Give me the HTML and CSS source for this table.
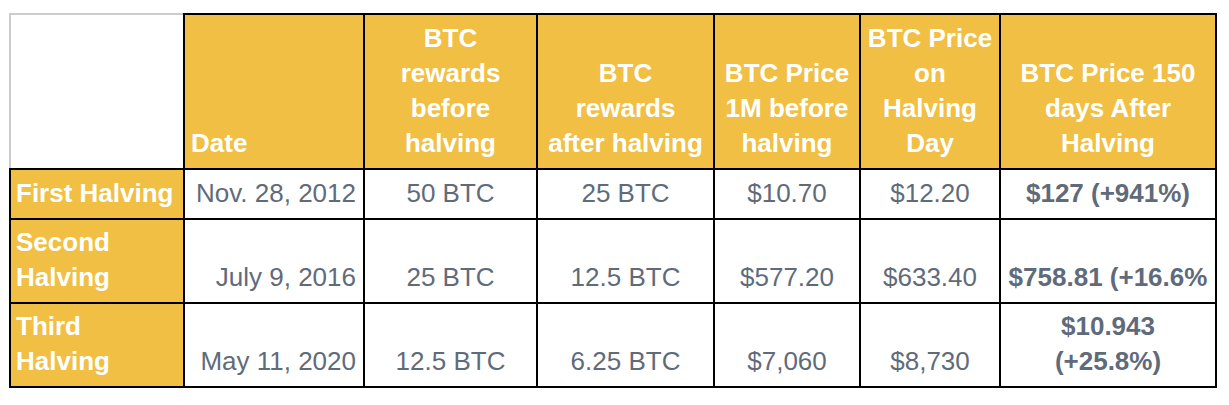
FILE: index.html
```html
<!DOCTYPE html>
<html lang="en">
<head>
<meta charset="utf-8">
<title>Bitcoin Halvings</title>
<link rel="stylesheet" href="styles.css">
</head>
<body>
<div class="page">
  <table class="halving">
    <colgroup>
      <col class="c-label">
      <col class="c-date">
      <col class="c-before">
      <col class="c-after">
      <col class="c-1m">
      <col class="c-day">
      <col class="c-150">
    </colgroup>
    <thead>
      <tr class="head-row">
        <th class="corner"></th>
        <th class="date-head">Date</th>
        <th>BTC<br>rewards<br>before<br>halving</th>
        <th>BTC<br>rewards<br>after halving</th>
        <th>BTC Price<br>1M before<br>halving</th>
        <th>BTC Price<br>on<br>Halving<br>Day</th>
        <th>BTC Price 150<br>days After<br>Halving</th>
      </tr>
    </thead>
    <tbody>
      <tr class="row-short">
        <th class="row-label">First Halving</th>
        <td class="date">Nov. 28, 2012</td>
        <td>50 BTC</td>
        <td>25 BTC</td>
        <td>$10.70</td>
        <td>$12.20</td>
        <td class="strong">$127 (+941%)</td>
      </tr>
      <tr class="row-tall">
        <th class="row-label">Second<br>Halving</th>
        <td class="date">July 9, 2016</td>
        <td>25 BTC</td>
        <td>12.5 BTC</td>
        <td>$577.20</td>
        <td>$633.40</td>
        <td class="strong">$758.81 (+16.6%</td>
      </tr>
      <tr class="row-tall">
        <th class="row-label">Third<br>Halving</th>
        <td class="date">May 11, 2020</td>
        <td>12.5 BTC</td>
        <td>6.25 BTC</td>
        <td>$7,060</td>
        <td>$8,730</td>
        <td class="strong">$10.943<br>(+25.8%)</td>
      </tr>
    </tbody>
  </table>
</div>
</body>
</html>
```

FILE: styles.css
```css
html, body {
  margin: 0;
  padding: 0;
  background: #ffffff;
}

.page {
  padding: 13px 0 0 9px;
}

.halving {
  border-collapse: collapse;
  table-layout: fixed;
  width: 1206px;
  font-family: "Liberation Sans", Arial, Helvetica, sans-serif;
  font-size: 26px;
  line-height: 35px;
}

.c-label { width: 174px; }
.c-date { width: 180px; }
.c-before { width: 173px; }
.c-after { width: 177px; }
.c-1m { width: 146px; }
.c-day { width: 140px; }
.c-150 { width: 216px; }

.halving th,
.halving td {
  border: 2px solid #000000;
  padding: 0 6px 7px 6px;
  vertical-align: bottom;
  text-align: center;
  white-space: nowrap;
  overflow: hidden;
}

.halving thead th {
  background: #f0bf43;
  color: #ffffff;
  font-weight: 700;
}

.halving thead th.corner {
  background: #ffffff;
  border-top-color: #cccccc;
  border-left-color: #cccccc;
}

.halving thead th.date-head {
  text-align: left;
}

.head-row { height: 155px; }
.row-short { height: 50px; }
.row-tall { height: 84px; }

.halving tbody th.row-label {
  background: #f0bf43;
  color: #ffffff;
  font-weight: 700;
  text-align: left;
  padding-left: 5px;
}

.halving tbody td {
  background: #ffffff;
  color: #5f6b7a;
  font-weight: 400;
}

.halving tbody td.date {
  text-align: right;
  padding-right: 7px;
}

.halving tbody td.strong {
  font-weight: 700;
  padding-left: 2px;
  padding-right: 2px;
}
```
